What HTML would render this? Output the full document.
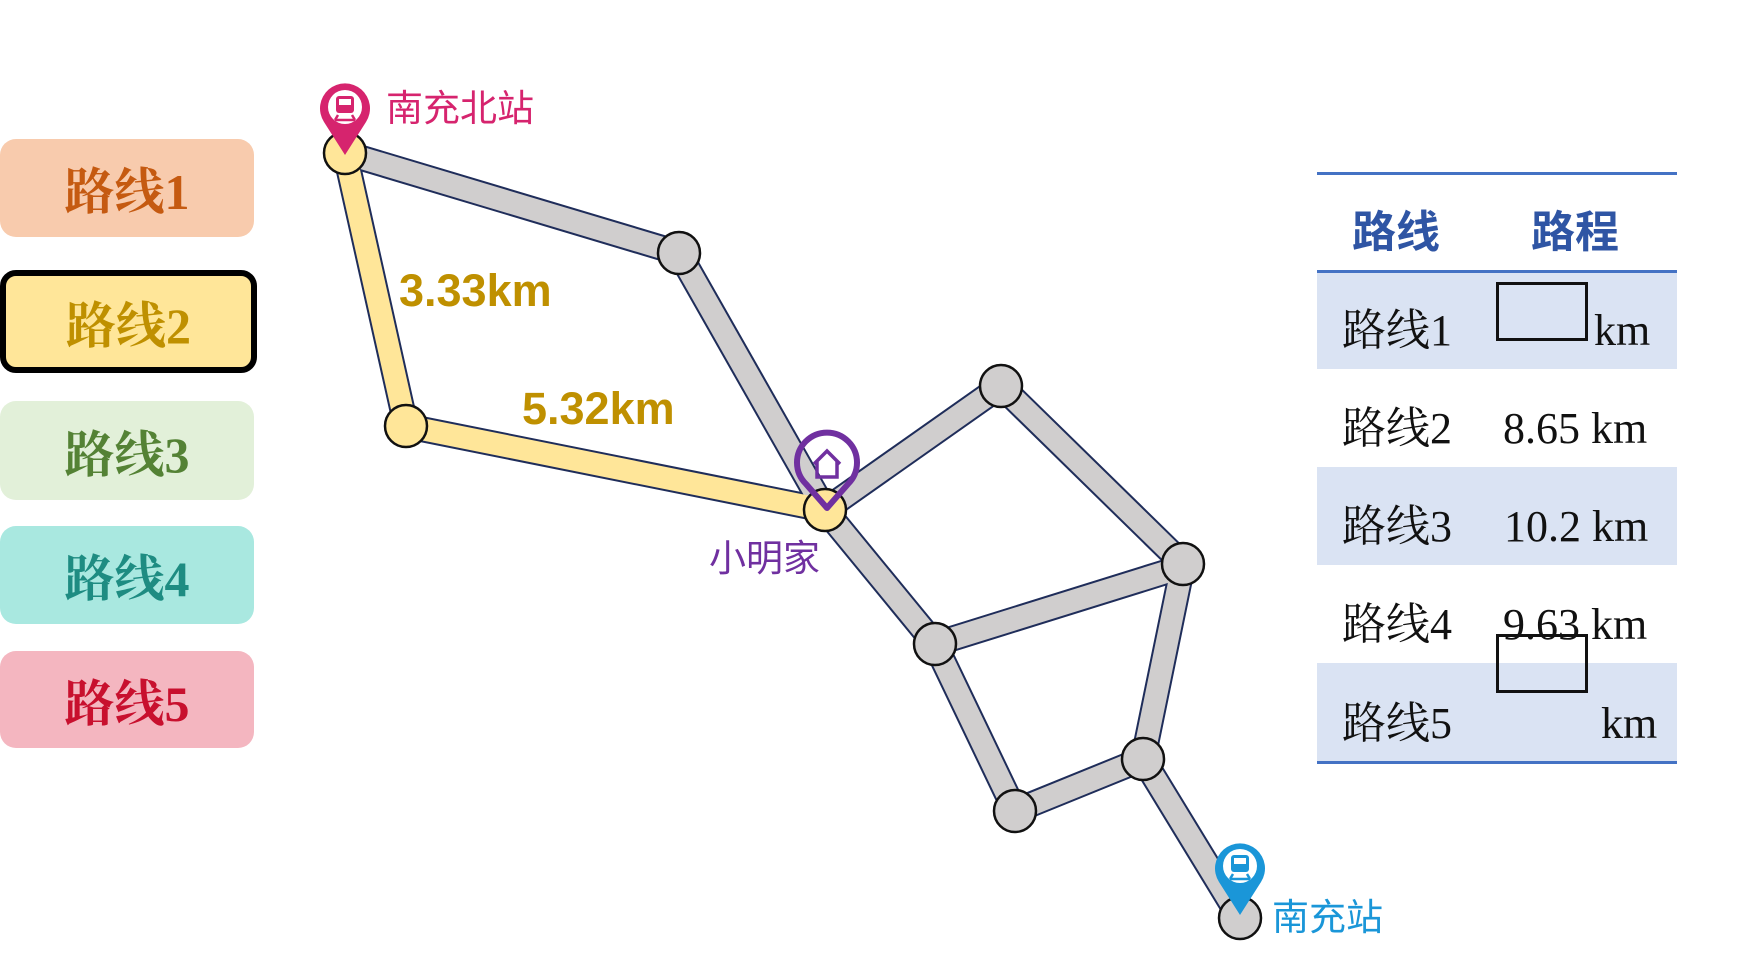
<!DOCTYPE html>
<html><head><meta charset="utf-8"><style>
body{margin:0;width:1764px;height:972px;background:#fff;overflow:hidden;position:relative;font-family:"Liberation Serif","Noto Serif CJK SC",serif}
.b{position:absolute;left:0;width:254px;border-radius:16px;display:flex;align-items:center;justify-content:center;font-weight:bold;font-size:50px;font-family:"Liberation Serif","Noto Serif CJK SC",serif;box-sizing:border-box}
.t{position:absolute;left:1317px;width:360px}
.r{position:absolute;left:0;width:360px}
.c{position:absolute;font-size:44px;color:#111;white-space:nowrap;line-height:1}
.box{position:absolute;left:179px;width:92px;height:59px;border:3px solid #111;box-sizing:border-box}
</style></head><body>
<div class="b" style="top:139px;height:98px;background:#f8cbad;color:#c55a11">路线1</div>
<div class="b" style="top:270px;height:103px;background:#ffe699;color:#bf9000;border:6px solid #000;width:257px">路线2</div>
<div class="b" style="top:401px;height:99px;background:#e2f0d9;color:#548235">路线3</div>
<div class="b" style="top:526px;height:98px;background:#a9e8e0;color:#1e8c82">路线4</div>
<div class="b" style="top:651px;height:97px;background:#f4b6c0;color:#c8102e">路线5</div>

<svg width="1764" height="972" style="position:absolute;left:0;top:0">
<g stroke-linecap="butt">
<g stroke="#1f2d5a" stroke-width="26">
<line x1="345" y1="153" x2="679" y2="253"/><line x1="679" y1="253" x2="825" y2="510"/>
<line x1="825" y1="510" x2="1001" y2="386"/><line x1="1001" y1="386" x2="1183" y2="564"/>
<line x1="825" y1="510" x2="935" y2="644"/><line x1="935" y1="644" x2="1166" y2="572"/>
<line x1="1183" y1="564" x2="1143" y2="759"/><line x1="935" y1="644" x2="1015" y2="811"/>
<line x1="1015" y1="811" x2="1143" y2="759"/><line x1="1143" y1="759" x2="1240" y2="918"/>
<line x1="345" y1="153" x2="406" y2="426"/><line x1="406" y1="426" x2="825" y2="510"/>
</g>
<g stroke="#d0cece" stroke-width="22">
<line x1="345" y1="153" x2="679" y2="253"/><line x1="679" y1="253" x2="825" y2="510"/>
<line x1="825" y1="510" x2="1001" y2="386"/><line x1="1001" y1="386" x2="1183" y2="564"/>
<line x1="825" y1="510" x2="935" y2="644"/><line x1="935" y1="644" x2="1166" y2="572"/>
<line x1="1183" y1="564" x2="1143" y2="759"/><line x1="935" y1="644" x2="1015" y2="811"/>
<line x1="1015" y1="811" x2="1143" y2="759"/><line x1="1143" y1="759" x2="1240" y2="918"/>
</g>
<g stroke="#ffe699" stroke-width="22">
<line x1="345" y1="153" x2="406" y2="426"/><line x1="406" y1="426" x2="825" y2="510"/>
</g>
</g>
<g stroke="#111" stroke-width="2.5">
<circle cx="679" cy="253" r="21" fill="#d0cece"/><circle cx="1001" cy="386" r="21" fill="#d0cece"/>
<circle cx="1183" cy="564" r="21" fill="#d0cece"/><circle cx="935" cy="644" r="21" fill="#d0cece"/>
<circle cx="1143" cy="759" r="21" fill="#d0cece"/><circle cx="1015" cy="811" r="21" fill="#d0cece"/>
<circle cx="1240" cy="918" r="21" fill="#d0cece"/>
<circle cx="345" cy="153" r="21" fill="#ffe699"/><circle cx="406" cy="426" r="21" fill="#ffe699"/>
<circle cx="825" cy="510" r="21" fill="#ffe699"/>
</g>
<path d="M345 155 L324 122 A25 25 0 1 1 366 122 Z" fill="#d6246e"/>
<circle cx="345" cy="107" r="17" fill="#fff"/>
<rect x="336" y="96" width="18" height="17" rx="3" fill="#d6246e"/><rect x="339" y="99" width="12" height="6" fill="#fff"/>
<path d="M338 115 l-3 5 M352 115 l3 5 M335 120 h20" stroke="#d6246e" stroke-width="2.5"/>
<path d="M1240 915 L1219 882 A25 25 0 1 1 1261 882 Z" fill="#1a96d8"/>
<circle cx="1240" cy="866" r="17" fill="#fff"/>
<rect x="1231" y="855" width="18" height="17" rx="3" fill="#1a96d8"/><rect x="1234" y="858" width="12" height="6" fill="#fff"/>
<path d="M1233 874 l-3 5 M1247 874 l3 5 M1230 879 h20" stroke="#1a96d8" stroke-width="2.5"/>
<path d="M827 508 L806 484 A30 30 0 1 1 848 484 Z" fill="none" stroke="#7030a0" stroke-width="6" stroke-linejoin="round"/>
<path d="M814 464 L827 451 L840 464 M817 461 V477 H837 V461" fill="none" stroke="#7030a0" stroke-width="3.5"/>
<g font-family="Liberation Sans, Noto Sans CJK SC, sans-serif">
<text x="386" y="121" font-size="37" fill="#d6246e">南充北站</text>
<text x="709" y="571" font-size="37" fill="#7030a0">小明家</text>
<text x="1272" y="930" font-size="37" fill="#1a96d8">南充站</text>
<text x="399" y="306" font-size="45" font-weight="bold" fill="#bf9000">3.33km</text>
<text x="522" y="424" font-size="45" font-weight="bold" fill="#bf9000">5.32km</text>
</g>
</svg>

<div class="t" style="top:172px;height:592px">
<div style="position:absolute;left:0;top:0;width:360px;height:3px;background:#4472c4"></div>
<div class="c" style="left:35px;top:34px;color:#2f55a4;font-weight:bold;font-size:44px;font-family:'Noto Sans CJK SC',sans-serif">路线</div>
<div class="c" style="left:214px;top:34px;color:#2f55a4;font-weight:bold;font-size:44px;font-family:'Noto Sans CJK SC',sans-serif">路程</div>
<div class="r" style="top:98px;height:99px;background:#dae3f3;border-top:3px solid #4472c4;box-sizing:border-box"></div>
<div class="r" style="top:295px;height:98px;background:#dae3f3"></div>
<div class="r" style="top:491px;height:98px;background:#dae3f3;border-bottom:3px solid #4472c4"></div>
<div class="c" style="left:25px;top:137px">路线1</div>
<div class="box" style="top:110px"></div><div class="c" style="left:277px;top:137px">km</div>
<div class="c" style="left:25px;top:235px">路线2</div><div class="c" style="left:186px;top:235px">8.65 km</div>
<div class="c" style="left:25px;top:333px">路线3</div><div class="c" style="left:187px;top:333px">10.2 km</div>
<div class="c" style="left:25px;top:431px">路线4</div><div class="c" style="left:186px;top:431px">9.63 km</div>
<div class="box" style="top:462px"></div>
<div class="c" style="left:25px;top:530px">路线5</div><div class="c" style="left:284px;top:530px">km</div>
</div>
</body></html>
